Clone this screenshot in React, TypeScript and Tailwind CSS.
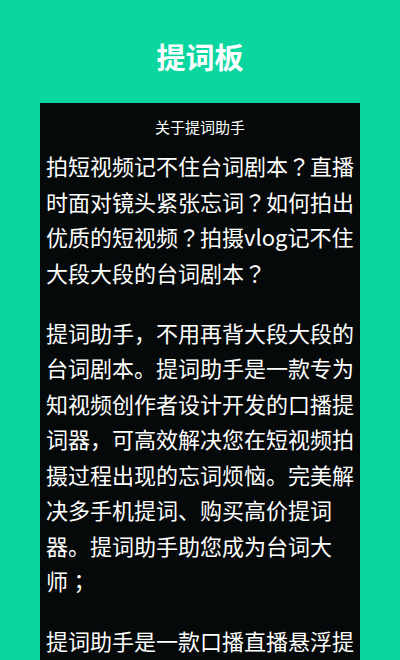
import React from "react";

const J = ({ c }: { c: string }) => (
  <span
    className="inline-block w-[1em] text-center"
    style={{ fontFamily: '"Noto Sans CJK JP", "Noto Sans CJK SC", sans-serif' }}
  >
    {c}
  </span>
);

export default function App() {
  const font = { fontFamily: '"Noto Sans CJK SC", "Noto Sans", sans-serif' };
  return (
    <div
      className="h-[660px] w-[400px] overflow-hidden bg-[#0bd6a0] flex flex-col items-center"
      style={font}
    >
      <h1 className="mt-[36px] h-[40px] text-[29px] leading-[40px] font-semibold text-white">提词板</h1>
      <div className="mt-[27px] w-[320px] flex-1 bg-[#050909] pl-[6px] pr-[4px] text-white">
        <div className="pt-[14px] pr-[2px] text-center text-[15px] leading-[20px]">关于提词助手</div>
        <p className="mt-[11px] text-[22px] leading-[35.5px] break-all">
          拍短视频记不住台词剧<span className="whitespace-nowrap">本<J c="？" /></span>直播时面对镜头紧张忘<span className="whitespace-nowrap">词<J c="？" /></span>如何拍出优质的短视<span className="whitespace-nowrap">频<J c="？" /></span>拍摄vlog记不住大段大段的台词剧<span className="whitespace-nowrap">本<J c="？" /></span>
        </p>
        <p className="mt-[24.5px] text-[22px] leading-[35.5px] break-all">
          提词助手，不用再背大段大段的台词剧本。提词助手是一款专为知视频创作者设计开发的口播提词器，可高效解决您在短视频拍摄过程出现的忘词烦恼。完美解决多手机提词、购买高价提词器。提词助手助您成为台词大<span className="whitespace-nowrap">师<J c="；" /></span>
        </p>
        <p className="mt-[24px] text-[22px] leading-[35.5px] break-all">
          提词助手是一款口播直播悬浮提词器，支持悬浮窗提词。
        </p>
      </div>
    </div>
  );
}
